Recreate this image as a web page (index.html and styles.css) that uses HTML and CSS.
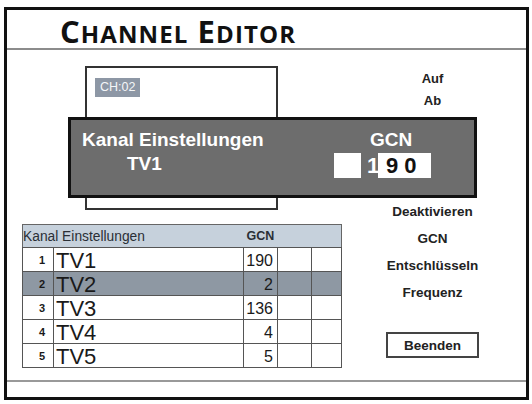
FILE: index.html
```html
<!DOCTYPE html>
<html lang="de">
<head>
<meta charset="utf-8">
<title>Channel Editor</title>
<link rel="stylesheet" href="styles.css">
</head>
<body>
<div class="screen">
  <header class="title-bar"><h1 class="title">C<span class="sc">HANNEL</span> E<span class="sc">DITOR</span></h1></header>
  <main class="body">
    <section class="left">
      <div class="preview"><span class="ch">CH:02</span></div>
      <table class="list">
        <colgroup><col class="c-num"><col class="c-name"><col class="c-gcn"><col class="c-a"><col class="c-b"></colgroup>
        <thead>
          <tr><th colspan="2" class="h-name">Kanal Einstellungen</th><th class="h-gcn">GCN</th><th colspan="2"></th></tr>
        </thead>
        <tbody>
          <tr><td class="num">1</td><td class="name">TV1</td><td class="gcn">190</td><td></td><td></td></tr>
          <tr class="sel"><td class="num">2</td><td class="name">TV2</td><td class="gcn">2</td><td></td><td></td></tr>
          <tr><td class="num">3</td><td class="name">TV3</td><td class="gcn">136</td><td></td><td></td></tr>
          <tr><td class="num">4</td><td class="name">TV4</td><td class="gcn">4</td><td></td><td></td></tr>
          <tr><td class="num">5</td><td class="name">TV5</td><td class="gcn">5</td><td></td><td></td></tr>
        </tbody>
      </table>
    </section>
    <nav class="menu">
      <div class="menu-top">
        <div class="item">Auf</div>
        <div class="item">Ab</div>
      </div>
      <div class="menu-mid">
        <div class="item">Deaktivieren</div>
        <div class="item">GCN</div>
        <div class="item">Entschlüsseln</div>
        <div class="item">Frequenz</div>
      </div>
      <button class="btn">Beenden</button>
    </nav>
    <div class="dialog">
      <div class="dlg-left">
        <div class="dlg-head">Kanal Einstellungen</div>
        <div class="dlg-sub">TV1</div>
      </div>
      <div class="dlg-right">
        <div class="dlg-head gcn-head">GCN</div>
        <div class="inputs">
          <span class="box"></span>
          <span class="one">1</span>
          <span class="field">9 0</span>
        </div>
      </div>
    </div>
  </main>
  <footer class="footer"></footer>
</div>
</body>
</html>
```
FILE: styles.css
```css
html, body {
  margin: 0;
  background: #fff;
  font-family: "Liberation Sans", Arial, sans-serif;
  color: #1a1a1a;
}

.screen {
  margin: 7px 0 0 4px;
  width: 525px;
  height: 393px;
  border: 3px solid #111;
  box-sizing: border-box;
  display: flex;
  flex-direction: column;
}

.title-bar {
  height: 40px;
  padding: 2px 0 0 53px;
  box-sizing: border-box;
  border-bottom: 2px solid #8c8c8c;
}

.title {
  margin: 0;
  font-family: "Open Sans", sans-serif;
  font-weight: 700;
  font-size: 31px;
  line-height: 38px;
  color: #111;
  letter-spacing: 1.1px;
  white-space: nowrap;
}

.title .sc {
  font-size: 24px;
}

.body {
  position: relative;
  flex: 1;
  display: flex;
}

.left {
  width: 363px;
}

.preview {
  margin: 16px 0 0 78px;
  width: 193px;
  height: 144px;
  border: 2px solid #333;
  box-sizing: border-box;
  padding: 10px 0 0 8px;
  line-height: 0;
}

.ch {
  display: inline-block;
  background: #8d97a5;
  color: #f4f6f8;
  font-size: 12.5px;
  height: 19px;
  line-height: 19px;
  padding: 0 5px;
}

.list {
  margin: 14px 0 0 15px;
  width: 319px;
  border-collapse: collapse;
  table-layout: fixed;
  border: 1px solid #666;
}

.c-num { width: 31px; }
.c-name { width: 190px; }
.c-gcn { width: 34px; }
.c-a { width: 34px; }
.c-b { width: 30px; }

.list th {
  height: 22px;
  padding: 0;
  background: #c6d1dc;
  border-top: 1px solid #666;
  border-bottom: 1px solid #555;
  color: #2a2f36;
}

.h-name {
  text-align: left;
  font-weight: normal;
  font-size: 13.8px;
  padding-left: 1px;
}

.h-gcn {
  font-size: 12.5px;
  font-weight: bold;
  text-align: center;
}

.list td {
  height: 21px;
  padding: 0;
  border: 1px solid #555;
  vertical-align: middle;
}

.num {
  text-align: right;
  padding-right: 8px !important;
  font-size: 11px;
  font-weight: bold;
}

.name {
  font-size: 22px;
  line-height: 21px;
  padding-left: 2px !important;
  padding-top: 1px !important;
}

.gcn {
  text-align: right;
  font-size: 16px;
  line-height: 19px;
  padding: 2px 4px 0 0 !important;
}

.sel td {
  background: #8e98a3;
}

.menu {
  width: 125px;
  display: flex;
  flex-direction: column;
  align-items: center;
  padding-top: 18px;
  font-size: 13px;
  font-weight: bold;
  color: #222;
}

.menu-top .item {
  line-height: 22px;
  text-align: center;
}

.menu-mid {
  margin-top: 86px;
}

.menu-mid .item {
  line-height: 27px;
  text-align: center;
  font-size: 13.5px;
}

.btn {
  margin-top: 26px;
  width: 93px;
  height: 26px;
  border: 2px solid #444;
  background: #fff;
  font-family: "Liberation Sans", Arial, sans-serif;
  font-size: 13.5px;
  font-weight: bold;
  color: #222;
  padding: 0;
}

.dialog {
  position: absolute;
  left: 61px;
  top: 67px;
  width: 409px;
  height: 81px;
  border: 3px solid #111;
  box-sizing: border-box;
  background: #6d6d6d;
  display: flex;
  padding: 7px 0 0 11px;
  color: #fff;
  font-size: 19px;
  font-weight: bold;
}

.dlg-left {
  width: 252px;
}

.dlg-head {
  line-height: 25px;
}

.dlg-sub {
  margin-top: 1px;
  line-height: 21px;
  padding-left: 45px;
}

.gcn-head {
  padding-left: 36px;
}

.inputs {
  display: flex;
  margin-top: 1px;
  height: 25px;
  font-size: 22px;
  line-height: 25px;
}

.box {
  width: 27px;
  height: 25px;
  background: #fff;
  margin-right: 6px;
}

.one {
  width: 11px;
  color: #fff;
}

.field {
  width: 53px;
  height: 25px;
  box-sizing: border-box;
  background: #fff;
  color: #111;
  padding-left: 8px;
  white-space: pre;
}

.footer {
  height: 15px;
  border-top: 2px solid #999;
}
```
